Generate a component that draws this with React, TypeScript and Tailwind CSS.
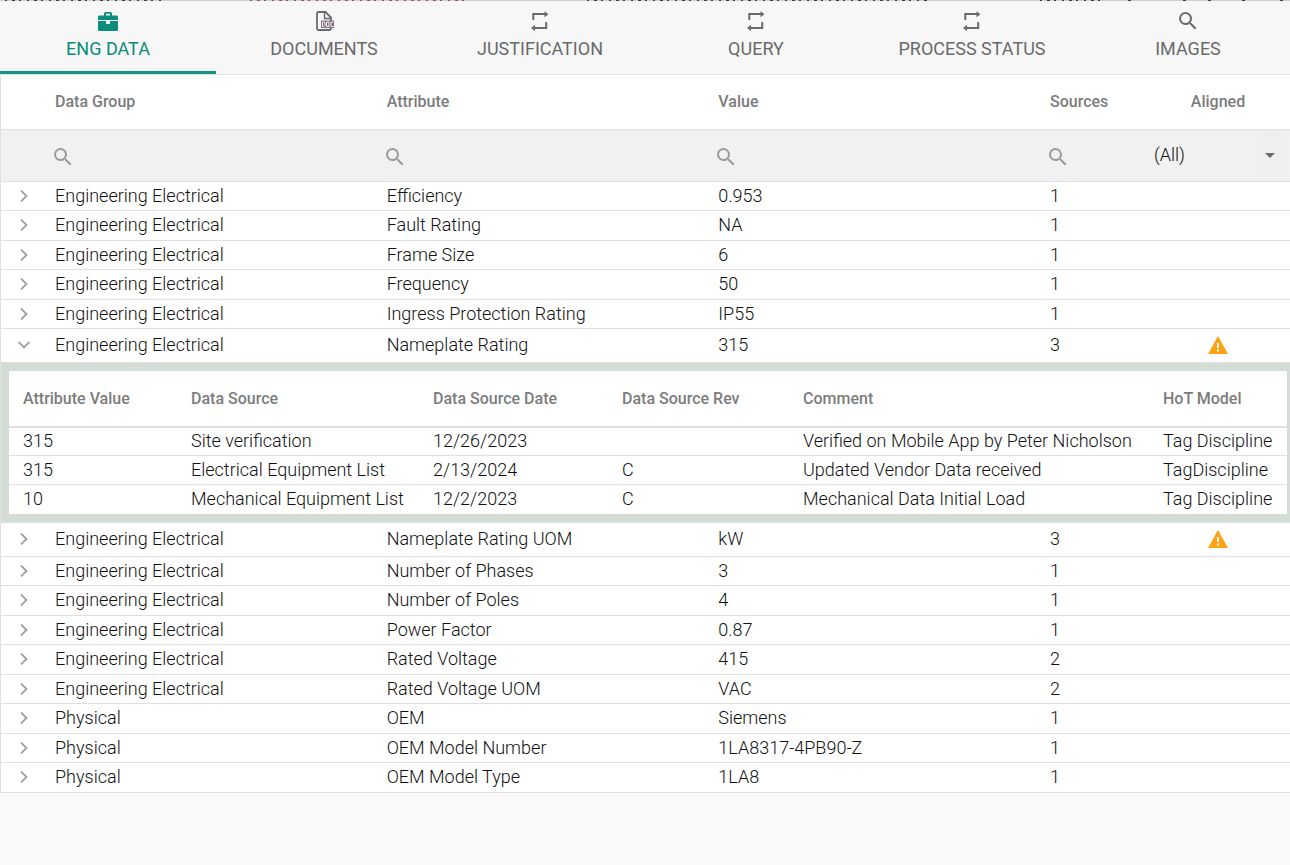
import { Fragment } from "react";
import type { ReactNode } from "react";
import { MdArrowDropDown, MdSearch } from "react-icons/md";

type SourceRecord = {
  value: string;
  source: string;
  date: string;
  rev: string;
  comment: string;
  model: string;
};

type Attribute = {
  group: string;
  name: string;
  value: string;
  sources: number;
  misaligned?: boolean;
  records?: SourceRecord[];
};

const ELECTRICAL = "Engineering Electrical";

const attributes: Attribute[] = [
  { group: ELECTRICAL, name: "Efficiency", value: "0.953", sources: 1 },
  { group: ELECTRICAL, name: "Fault Rating", value: "NA", sources: 1 },
  { group: ELECTRICAL, name: "Frame Size", value: "6", sources: 1 },
  { group: ELECTRICAL, name: "Frequency", value: "50", sources: 1 },
  { group: ELECTRICAL, name: "Ingress Protection Rating", value: "IP55", sources: 1 },
  {
    group: ELECTRICAL,
    name: "Nameplate Rating",
    value: "315",
    sources: 3,
    misaligned: true,
    records: [
      {
        value: "315",
        source: "Site verification",
        date: "12/26/2023",
        rev: "",
        comment: "Verified on Mobile App by Peter Nicholson",
        model: "Tag Discipline",
      },
      {
        value: "315",
        source: "Electrical Equipment List",
        date: "2/13/2024",
        rev: "C",
        comment: "Updated Vendor Data received",
        model: "TagDiscipline",
      },
      {
        value: "10",
        source: "Mechanical Equipment List",
        date: "12/2/2023",
        rev: "C",
        comment: "Mechanical Data Initial Load",
        model: "Tag Discipline",
      },
    ],
  },
  { group: ELECTRICAL, name: "Nameplate Rating UOM", value: "kW", sources: 3, misaligned: true },
  { group: ELECTRICAL, name: "Number of Phases", value: "3", sources: 1 },
  { group: ELECTRICAL, name: "Number of Poles", value: "4", sources: 1 },
  { group: ELECTRICAL, name: "Power Factor", value: "0.87", sources: 1 },
  { group: ELECTRICAL, name: "Rated Voltage", value: "415", sources: 2 },
  { group: ELECTRICAL, name: "Rated Voltage UOM", value: "VAC", sources: 2 },
  { group: "Physical", name: "OEM", value: "Siemens", sources: 1 },
  { group: "Physical", name: "OEM Model Number", value: "1LA8317-4PB90-Z", sources: 1 },
  { group: "Physical", name: "OEM Model Type", value: "1LA8", sources: 1 },
];

function BriefcaseIcon() {
  return (
    <svg viewBox="0 0 20 20" className="size-5" fill="currentColor" aria-hidden="true">
      <path
        fillRule="evenodd"
        d="M6 4.600V2.800A1.800 1.800 0 0 1 7.800 1h4.400A1.800 1.800 0 0 1 14 2.800v1.800h4.500A1.500 1.500 0 0 1 20 6.100V9H0V6.100a1.500 1.500 0 0 1 1.500-1.500zM8 4.600h4V2.800H8z"
      />
      <path d="M0 10h8v3h4v-3h8v8.500a1.500 1.500 0 0 1-1.500 1.500h-17A1.500 1.500 0 0 1 0 18.500z" />
    </svg>
  );
}

function DocIcon() {
  return (
    <svg viewBox="0 0 20 20" className="size-5" fill="none" stroke="currentColor" aria-hidden="true">
      <path d="M17 10V6.500L11.500 1H4.500a1.500 1.500 0 0 0-1.500 1.500v15A1.500 1.500 0 0 0 4.500 19H15a2 2 0 0 0 2-2" strokeWidth="1.800" />
      <path d="M10.500 1v6.500H17" strokeWidth="1.400" />
      <path d="M7 9.500h13v7.500H7z" fill="#7b7383" stroke="none" />
      <path d="M8.500 11h1.500l1 1v2.500l-1 1H8.500zM12.500 11H15v4.500h-2.500zM19.500 11H17v4.500h2.500" stroke="#fff" strokeWidth=".9" />
    </svg>
  );
}

function RepeatIcon() {
  return (
    <svg viewBox="0 0 20 20" className="size-5" fill="currentColor" aria-hidden="true">
      <path d="M2.300 9V2h12.200V.2L18.500 3.200 14.500 6.200V4H4.300V9zM17.200 11v7H5v2L1 16.900 5 13.800v2.200h10.200V11z" />
    </svg>
  );
}

function WarningIcon() {
  return (
    <svg viewBox="0 0 20 18" className="mx-auto h-[18px] w-5" role="img" aria-label="Not aligned">
      <path d="M10 0l10 18H0z" fill="#ffa114" />
      <path d="M9 7h2v5H9zM9 13.500h2v2H9z" fill="#fff" />
    </svg>
  );
}

function Chevron({ open }: { open: boolean }) {
  return (
    <svg
      viewBox="0 0 12 12"
      className="mx-auto size-3"
      fill="none"
      stroke="#a0a0a0"
      strokeWidth="1.800"
      aria-hidden="true"
    >
      <path d={open ? "M.5 3L6 8.500 11.500 3" : "M3 .5L8.500 6 3 11.500"} />
    </svg>
  );
}

// Last pixel row of the panel that is scrolled away above the tabs
function ScrolledEdge() {
  return (
    <svg className="block h-px w-full bg-[#cfcfcf]" aria-hidden="true">
      <g strokeWidth="2" strokeDasharray="2 5 3 4 2 6">
        <path d="M5 0H165M587 0H930M1040 0H1105" stroke="#3c3c3c" />
        <path d="M250 0H470" stroke="#a04a60" />
        <path d="M1128 0h3M1183 0h3M1208 0h3M1242 0h3M1280 0h3" stroke="#3c3c3c" strokeDasharray="none" />
      </g>
    </svg>
  );
}

const tabs: { label: string; icon: ReactNode }[] = [
  { label: "ENG DATA", icon: <BriefcaseIcon /> },
  { label: "DOCUMENTS", icon: <DocIcon /> },
  { label: "JUSTIFICATION", icon: <RepeatIcon /> },
  { label: "QUERY", icon: <RepeatIcon /> },
  { label: "PROCESS STATUS", icon: <RepeatIcon /> },
  { label: "IMAGES", icon: <MdSearch className="size-6" /> },
];

function Tabs() {
  return (
    <div className="overflow-hidden border-b border-[#e0e0e0] bg-[#f7f7f7]">
      <div role="tablist" className="-mr-1.5 grid grid-cols-6">
        {tabs.map(({ label, icon }, index) => (
          <button
            key={label}
            type="button"
            role="tab"
            aria-selected={index === 0}
            className="flex h-[73px] flex-col items-center border-b-3 border-transparent pt-2 text-lg leading-6 text-[#6a6a6a] aria-selected:border-[#0f9485] aria-selected:text-[#0b8c7d]"
          >
            <span className="mb-1 flex h-6 items-center">{icon}</span>
            {label}
          </button>
        ))}
      </div>
    </div>
  );
}

function SearchBox({ label }: { label: string }) {
  return (
    <label className="flex items-center pt-1">
      <MdSearch className="-ml-1 size-6 shrink-0 text-[#9b9b9b]" />
      <input type="text" aria-label={label} className="w-full min-w-0 bg-transparent outline-none" />
    </label>
  );
}

function SourceTable({ records }: { records: SourceRecord[] }) {
  return (
    <table className="w-full table-fixed border-collapse bg-white text-left">
      <colgroup>
        <col className="w-[168px]" />
        <col className="w-[242px]" />
        <col className="w-[189px]" />
        <col className="w-[181px]" />
        <col />
        <col className="w-[138px]" />
      </colgroup>
      <thead>
        <tr className="h-14 border-b-2 border-[#e0e0e0] text-base text-[#7c7c7c]">
          {["Attribute Value", "Data Source", "Data Source Date", "Data Source Rev", "Comment", "HoT Model"].map(
            (title) => (
              <th key={title} scope="col" className="px-3.5 pt-0.5 font-medium whitespace-nowrap">
                {title}
              </th>
            ),
          )}
        </tr>
      </thead>
      <tbody>
        {records.map((record) => (
          <tr key={record.source} className="h-[29px] border-b border-[#e0e0e0] last:border-b-0">
            {[record.value, record.source, record.date, record.rev, record.comment, record.model].map((text, i) => (
              <td key={i} className="pl-3.5 whitespace-nowrap">
                {text}
              </td>
            ))}
          </tr>
        ))}
      </tbody>
    </table>
  );
}

function AttributeRow({ item }: { item: Attribute }) {
  const open = item.records !== undefined;
  return (
    <Fragment>
      <tr
        className={
          item.misaligned
            ? "h-[34px] border-b border-[#e0e0e0]"
            : "h-[29px] border-b border-[#e0e0e0] even:h-[30px]"
        }
      >
        <td>
          <button type="button" aria-expanded={open} aria-label={`Sources of ${item.name}`} className="block w-full">
            <Chevron open={open} />
          </button>
        </td>
        <td className="px-2">{item.group}</td>
        <td className="px-2">{item.name}</td>
        <td className="px-2">{item.value}</td>
        <td className="px-2">{item.sources}</td>
        <td>{item.misaligned && <WarningIcon />}</td>
      </tr>
      {item.records && (
        <tr className="border-b border-[#e0e0e0]">
          <td colSpan={6} className="bg-[#d3ddd6] py-2 pr-[3px] pl-2">
            <SourceTable records={item.records} />
          </td>
        </tr>
      )}
    </Fragment>
  );
}

export default function App() {
  return (
    <div className="min-h-screen bg-[#f9f9f9] font-[Roboto,sans-serif] text-lg leading-6 text-[#111111]">
      <ScrolledEdge />
      <Tabs />
      <div className="border-l border-[#e0e0e0]">
        <table className="w-full table-fixed border-collapse bg-white text-left font-light">
          <colgroup>
            <col className="w-[46px]" />
            <col />
            <col />
            <col />
            <col className="w-[104px]" />
            <col className="w-36" />
          </colgroup>
          <thead>
            <tr className="h-[54px] border-b border-[#e0e0e0] text-base text-[#7c7c7c]">
              <td />
              {["Data Group", "Attribute", "Value", "Sources"].map((title) => (
                <th key={title} scope="col" className="px-2 font-medium">
                  {title}
                </th>
              ))}
              <th scope="col" className="text-center font-medium">
                Aligned
              </th>
            </tr>
            <tr className="h-[52px] border-b border-[#e0e0e0] bg-[#f1f1f1]">
              <td />
              {["Data Group", "Attribute", "Value", "Sources"].map((title) => (
                <td key={title} className="px-2">
                  <SearchBox label={`Filter ${title}`} />
                </td>
              ))}
              <td className="px-2">
                <div className="flex items-center">
                  <select aria-label="Filter Aligned" className="min-w-0 flex-1 appearance-none bg-transparent">
                    <option>(All)</option>
                    <option>Aligned</option>
                    <option>Not aligned</option>
                  </select>
                  <span className="-my-3 flex h-[51px] items-center bg-[#efefef]">
                    <MdArrowDropDown className="size-6 text-[#6b6b6b]" />
                  </span>
                </div>
              </td>
            </tr>
          </thead>
          <tbody>
            {attributes.map((item) => (
              <AttributeRow key={item.name} item={item} />
            ))}
          </tbody>
        </table>
      </div>
    </div>
  );
}
